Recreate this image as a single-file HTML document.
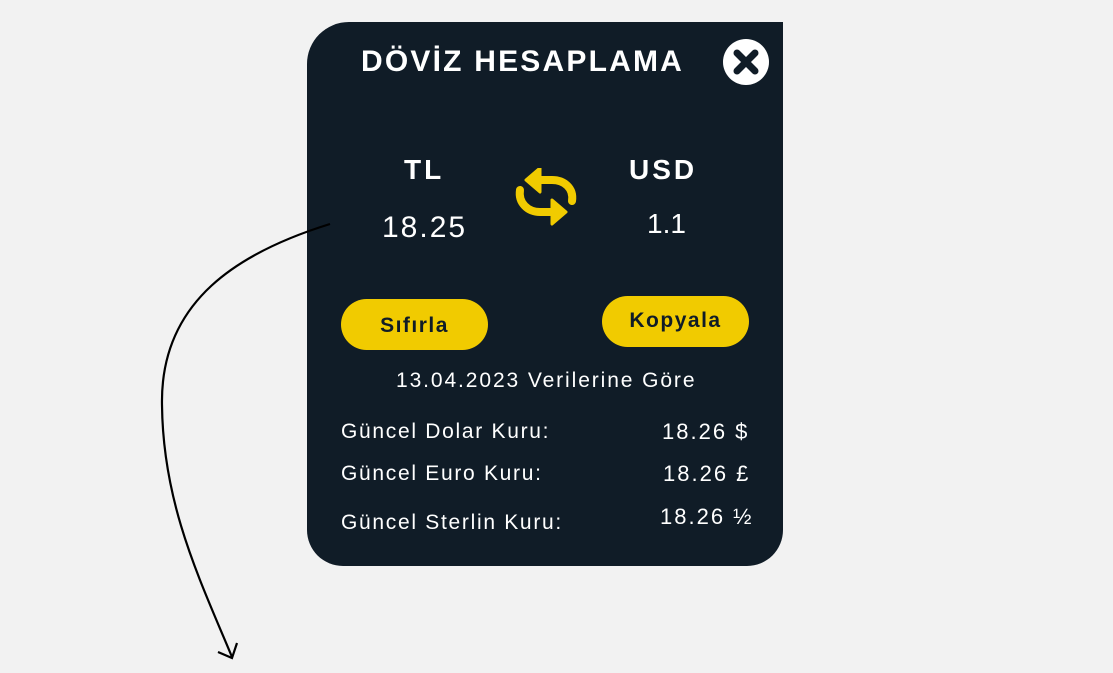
<!DOCTYPE html>
<html><head><meta charset="utf-8"><style>
body{margin:0;width:1113px;height:673px;background:#f2f2f2;position:relative;overflow:hidden;font-family:"Liberation Sans",sans-serif}
.card{position:absolute;left:307px;top:22px;width:476px;height:544px;background:#101c27;border-radius:42px 0 36px 36px}
.t{position:absolute;color:#fff;white-space:nowrap}
.btn{position:absolute;background:#f1cb00;border-radius:26px;color:#101c27;font-weight:bold;font-size:21px;text-align:center;letter-spacing:1.5px}
.r{font-size:21px;letter-spacing:1.7px}
.v{font-size:22px;letter-spacing:2px}
</style></head><body>
<div class="card"></div>
<div class="t" style="left:361px;top:45px;font-size:30px;font-weight:bold;letter-spacing:2.2px">DÖVİZ HESAPLAMA</div>
<svg style="position:absolute;left:722px;top:38px" width="48" height="48" viewBox="0 0 48 48"><circle cx="24" cy="24" r="23" fill="#fff"/><path d="M15 15L33 33M33 15L15 33" stroke="#101c27" stroke-width="7" stroke-linecap="round"/></svg>
<div class="t" style="left:404px;top:154px;font-size:28px;font-weight:bold;letter-spacing:3px">TL</div>
<div class="t" style="left:629px;top:154px;font-size:28px;font-weight:bold;letter-spacing:3px">USD</div>
<div class="t" style="left:382px;top:211px;font-size:30px;letter-spacing:2px">18.25</div>
<div class="t" style="left:647px;top:208px;font-size:28px">1.1</div>
<svg style="position:absolute;left:512px;top:168px" width="68" height="60" viewBox="0 0 68 60">
<path d="M60 33C62 20 52 12 40 12H24" fill="none" stroke="#f1cb00" stroke-width="8" stroke-linecap="round"/>
<path d="M28 0L14 12L28 24Z" fill="#f1cb00" stroke="#f1cb00" stroke-width="3" stroke-linejoin="round"/>
<path d="M8 22C6 35 16 44 28 44H44" fill="none" stroke="#f1cb00" stroke-width="8" stroke-linecap="round"/>
<path d="M40 32L54 44L40 56Z" fill="#f1cb00" stroke="#f1cb00" stroke-width="3" stroke-linejoin="round"/>
</svg>
<div class="btn" style="left:341px;top:299px;width:147px;height:51px;line-height:53px">Sıfırla</div>
<div class="btn" style="left:602px;top:296px;width:147px;height:51px;line-height:50px">Kopyala</div>
<div class="t" style="left:396px;top:369px;font-size:21px;letter-spacing:1.9px">13.04.2023 Verilerine Göre</div>
<div class="t r" style="left:341px;top:420px">Güncel Dolar Kuru:</div>
<div class="t v" style="left:662px;top:419px">18.26 $</div>
<div class="t r" style="left:341px;top:462px">Güncel Euro Kuru:</div>
<div class="t v" style="left:663px;top:461px">18.26 £</div>
<div class="t r" style="left:341px;top:511px">Güncel Sterlin Kuru:</div>
<div class="t v" style="left:660px;top:504px">18.26 ½</div>
<svg style="position:absolute;left:0;top:0" width="1113" height="673">
<path d="M330 224C240 252 160 300 162 405C163 505 200 580 232 657" fill="none" stroke="#000" stroke-width="2.2"/>
<path d="M218 652L232 658L237 643" fill="none" stroke="#000" stroke-width="2.2"/>
</svg>
</body></html>
